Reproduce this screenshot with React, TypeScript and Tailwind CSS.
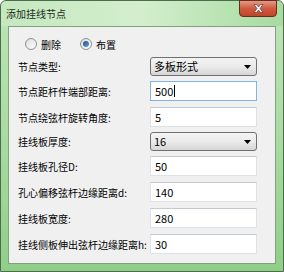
import React from "react";

const font = { fontFamily: '"Noto Sans CJK SC", "Liberation Sans", sans-serif' };

function Radio({ checked }: { checked?: boolean }) {
  return (
    <span className="w-[12px] h-[12px] rounded-full border border-[#8e8f8f] bg-gradient-to-br from-[#dcdcdc] to-[#ffffff] flex items-center justify-center">
      {checked && <span className="w-[6px] h-[6px] rounded-full bg-gradient-to-br from-[#1b4f8c] to-[#5ea3e6]" />}
    </span>
  );
}

function Select({ value }: { value: string }) {
  return (
    <div className="w-[107px] h-[19px] rounded-[3px] border border-[#707070] bg-gradient-to-b from-[#f3f3f3] via-[#ebebeb] to-[#d6d6d6] flex items-center pl-[3px] pr-[5px] text-[11px] text-black">
      <span className="flex-1">{value}</span>
      <svg width="7" height="4" viewBox="0 0 7 4">
        <path d="M0 0h7L3.5 4z" fill="#000" />
      </svg>
    </div>
  );
}

function Input({ value, focused }: { value: string; focused?: boolean }) {
  return (
    <div
      className={`w-[107px] h-[20px] border bg-white flex items-center pl-[4px] text-[11px] text-black ${
        focused ? "border-[#7eb4ea]" : "border-[#dde2e8] border-t-[#c5cad2]"
      }`}
    >
      {value}
      {focused && <span className="w-px h-[12px] bg-black ml-px" />}
    </div>
  );
}

const rows: { label: string; kind: "select" | "input"; value: string; focused?: boolean; mt: string }[] = [
  { label: "节点类型:", kind: "select", value: "多板形式", mt: "mt-0" },
  { label: "节点距杆件端部距离:", kind: "input", value: "500", focused: true, mt: "mt-[5px]" },
  { label: "节点绕弦杆旋转角度:", kind: "input", value: "5", mt: "mt-[6px]" },
  { label: "挂线板厚度:", kind: "select", value: "16", mt: "mt-[5px]" },
  { label: "挂线板孔径D:", kind: "input", value: "50", mt: "mt-[5px]" },
  { label: "孔心偏移弦杆边缘距离d:", kind: "input", value: "140", mt: "mt-[6px]" },
  { label: "挂线板宽度:", kind: "input", value: "280", mt: "mt-[6px]" },
  { label: "挂线侧板伸出弦杆边缘距离h:", kind: "input", value: "30", mt: "mt-[6px]" },
];

export default function App() {
  return (
    <div style={font} className="w-[284px] h-[272px] bg-white">
      <div className="w-[284px] h-[272px] rounded-t-[6px] border border-[#4d6b4d] bg-gradient-to-b from-[#bfe5b8] via-[#a9dba2] to-[#8fcf88] flex flex-col">
        {/* Title bar */}
        <div className="h-[25px] flex items-start relative bg-gradient-to-r from-[#c5e8bf] via-[#d3eecd] to-[#a6dba0] rounded-t-[6px]">
          <span className="ml-[5px] mt-[6px] text-[10px] leading-[13px] text-[#1e2a1e]">添加挂线节点</span>
          <div className="absolute right-[6px] top-[-1px] w-[38px] h-[17px] rounded-b-[4px] border border-[#6b2a1c] bg-gradient-to-b from-[#e29b86] via-[#cf5a3e] to-[#c0442a] flex items-center justify-center">
            <svg width="11" height="9" viewBox="0 0 11 9">
              <path d="M1 0.5h2.5L5.5 3l2-2.5H10L7 4.5 10 8.5H7.5L5.5 6l-2 2.5H1l3-4z" fill="#fff" stroke="#5a3a30" strokeWidth="0.7" />
            </svg>
          </div>
        </div>
        {/* Client area */}
        <div className="mx-[7px] h-[238px] border border-[#7fa27a] bg-[#f0f0f0] text-[10px] text-black">
          <div className="flex items-center h-[14px] mt-[10px] ml-[16px]">
            <Radio />
            <span className="ml-[4px]">删除</span>
            <span className="ml-[19px]">
              <Radio checked />
            </span>
            <span className="ml-[4px]">布置</span>
          </div>
          <div className="mt-[6px] flex flex-col">
            {rows.map((r) => (
              <div key={r.label} className={`flex items-center ${r.mt}`}>
                <span className="w-[141px] pl-[9px] whitespace-nowrap">{r.label}</span>
                {r.kind === "select" ? <Select value={r.value} /> : <Input value={r.value} focused={r.focused} />}
              </div>
            ))}
          </div>
        </div>
      </div>
    </div>
  );
}
